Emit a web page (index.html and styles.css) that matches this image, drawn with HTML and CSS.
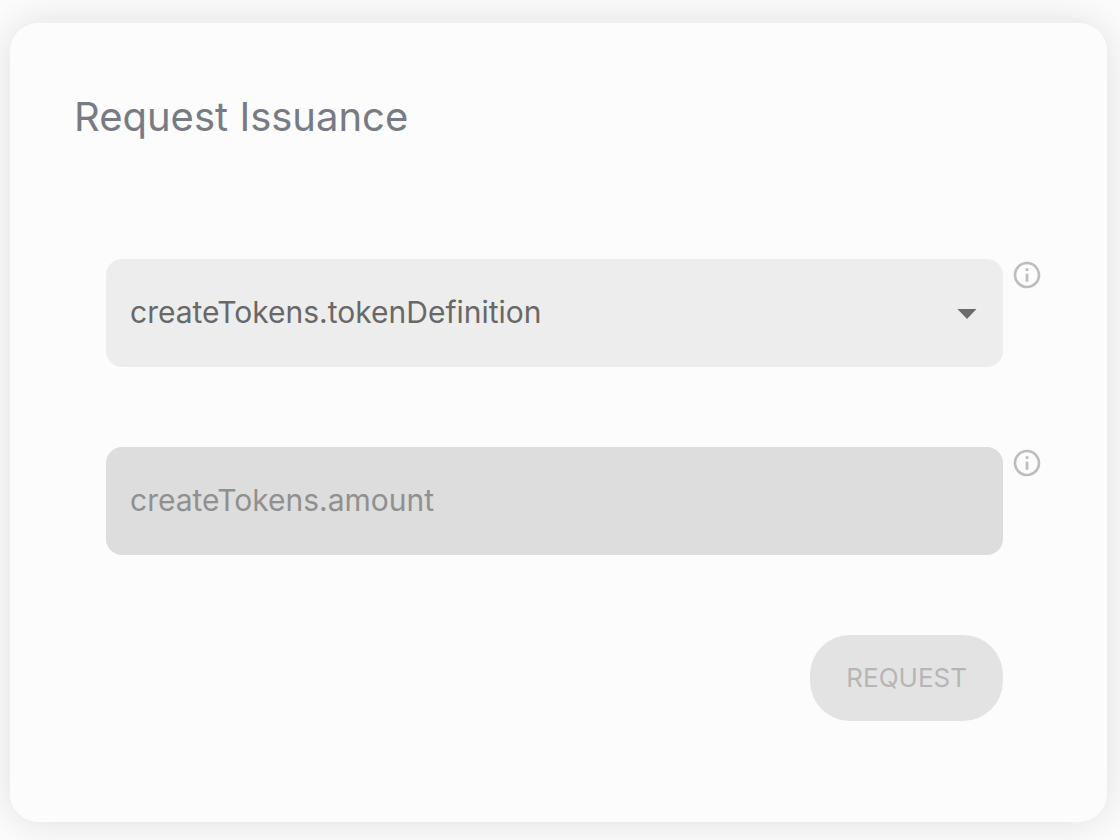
FILE: index.html
```html
<!DOCTYPE html>
<html lang="en">
<head>
<meta charset="utf-8">
<title>Request Issuance</title>
<link rel="stylesheet" href="styles.css">
</head>
<body>
<main class="card">
  <h1 class="title">Request Issuance</h1>
  <form class="form">
    <div class="row">
      <div class="select-wrap">
        <select class="field field-select" aria-label="Token definition">
          <option>createTokens.tokenDefinition</option>
        </select>
        <svg class="arrow" viewBox="0 0 20 10" aria-hidden="true"><path d="M0.500 0h19L10 10z"/></svg>
      </div>
      <svg class="info" viewBox="0 0 24 24" role="img" aria-label="Information"><path d="M11 7h2v2h-2zm0 4h2v6h-2zm1-9C6.480 2 2 6.480 2 12s4.480 10 10 10 10-4.480 10-10S17.520 2 12 2zm0 18c-4.410 0-8-3.590-8-8s3.590-8 8-8 8 3.590 8 8-3.590 8-8 8z"/></svg>
    </div>
    <div class="row">
      <input class="field field-amount" type="text" placeholder="createTokens.amount" aria-label="Amount" disabled>
      <svg class="info" viewBox="0 0 24 24" role="img" aria-label="Information"><path d="M11 7h2v2h-2zm0 4h2v6h-2zm1-9C6.480 2 2 6.480 2 12s4.480 10 10 10 10-4.480 10-10S17.520 2 12 2zm0 18c-4.410 0-8-3.590-8-8s3.590-8 8-8 8 3.590 8 8-3.590 8-8 8z"/></svg>
    </div>
    <div class="actions">
      <button class="request" type="submit" disabled>REQUEST</button>
    </div>
  </form>
</main>
</body>
</html>
```
FILE: styles.css
```css
* {
  box-sizing: border-box;
}

body {
  margin: 0;
  padding: 23px 13px 18px 10px;
  background: #fcfcfc;
  font-family: Inter, "Liberation Sans", sans-serif;
}

.card {
  padding: 70px 64px 101px;
  border-radius: 28px;
  background: #fcfcfc;
  box-shadow: 0 0 40px rgba(0, 0, 0, 0.12);
}

.title {
  margin: 0 0 118px;
  color: #787b83;
  font-size: 40px;
  font-weight: 400;
  line-height: 48px;
}

.form {
  display: flex;
  flex-direction: column;
  gap: 80px;
  padding-left: 32px;
}

.row {
  display: flex;
  align-items: flex-start;
  gap: 8px;
}

.select-wrap {
  position: relative;
  flex: 1;
}

.field {
  flex: 1;
  display: block;
  width: 100%;
  min-width: 0;
  height: 108px;
  margin: 0;
  padding: 0 24px 2px;
  border: 0;
  border-radius: 16px;
  font-family: inherit;
  font-size: 30px;
  font-weight: 400;
  appearance: none;
}

.field-select {
  background: #ededed;
  color: #686868;
}

.field-amount {
  background: #dddddd;
}

.field-amount::placeholder {
  color: #909090;
  opacity: 1;
}

.arrow {
  position: absolute;
  top: 50px;
  right: 26px;
  width: 20px;
  height: 10px;
  fill: #6c6c6c;
  pointer-events: none;
}

.info {
  flex: none;
  width: 32px;
  height: 32px;
  fill: #bdbdbd;
}

.actions {
  display: flex;
  justify-content: flex-end;
  padding-right: 40px;
}

.request {
  padding: 27px 36px;
  border: 0;
  border-radius: 40px;
  background: #e3e3e3;
  color: #b6b6b6;
  font-family: inherit;
  font-size: 26px;
  font-weight: 400;
  line-height: 32px;
}
```
